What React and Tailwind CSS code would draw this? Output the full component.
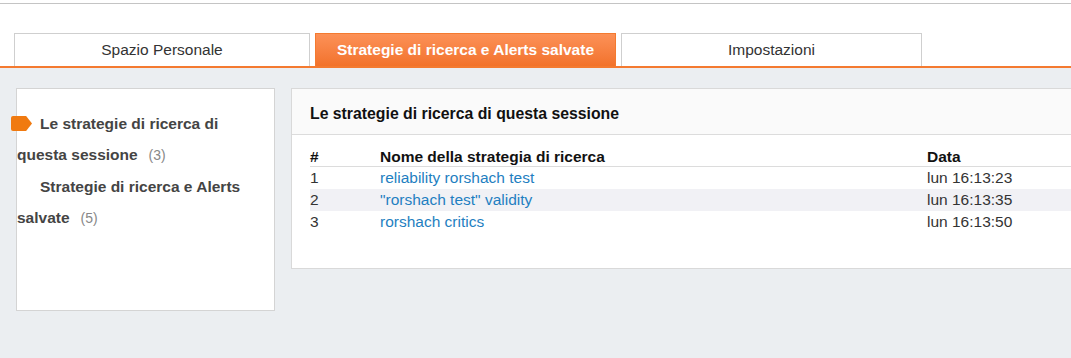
import React from "react";

const tabs = [
  { label: "Spazio Personale", active: false, w: "w-[296px]" },
  { label: "Strategie di ricerca e Alerts salvate", active: true, w: "w-[301px]" },
  { label: "Impostazioni", active: false, w: "w-[301px]" },
];

const strategie = [
  { n: 1, nome: "reliability rorshach test", data: "lun 16:13:23" },
  { n: 2, nome: "\"rorshach test\" validity", data: "lun 16:13:35" },
  { n: 3, nome: "rorshach critics", data: "lun 16:13:50" },
];

export default function App() {
  return (
    <div className="w-[1071px] h-[358px] overflow-hidden bg-white font-['Liberation_Sans',Arial,sans-serif] text-[15.5px] text-[#333]">
      {/* barra superiore */}
      <div className="h-[3px]" />
      <div className="h-px bg-[#c4c4c4]" />

      {/* tabs */}
      <div className="flex gap-[5px] pl-[14px] pt-[29px]">
        {tabs.map((t) =>
          t.active ? (
            <div
              key={t.label}
              className={`${t.w} h-[33px] flex items-center justify-center bg-gradient-to-b from-[#fc9157] to-[#f2722a] text-white font-bold border border-[#f47a30] border-b-0`}
            >
              {t.label}
            </div>
          ) : (
            <div
              key={t.label}
              className={`${t.w} h-[33px] flex items-center justify-center bg-white border border-[#cfcfcf] border-b-0 text-[#333]`}
            >
              {t.label}
            </div>
          )
        )}
      </div>
      <div className="h-[2px] bg-[#f47a30]" />

      {/* contenuto */}
      <div className="bg-[#ebeef1] h-[300px] flex items-start gap-[16px] pl-[16px] pt-[20px]">
        {/* menu laterale */}
        <div className="relative w-[259px] h-[223px] shrink-0 bg-white border border-[#d4d4d4] pt-[19px] pr-[12px] leading-[31px] font-bold text-[#444]">
          <div className="relative indent-[23px]">
            <span className="absolute left-[-6px] top-[8px] w-[21px] h-[15px] bg-[#f07a10] [clip-path:polygon(0_0,72%_0,100%_50%,72%_100%,0_100%)] rounded-l-[2px]" />
            Le strategie di ricerca di questa sessione
            <span className="ml-[11px] font-normal text-[14px] text-[#888]">(3)</span>
          </div>
          <div className="indent-[23px]">
            Strategie di ricerca e Alerts salvate
            <span className="ml-[11px] font-normal text-[14px] text-[#888]">(5)</span>
          </div>
        </div>

        {/* pannello strategie */}
        <div className="w-[820px] h-[181px] shrink-0 bg-white border border-[#d9d9d9]">
          <div className="h-[46px] bg-[#fafafa] border-b border-[#dcdcdc] flex items-center pl-[18px] pt-[4px] font-bold text-[15.8px] text-[#111]">
            Le strategie di ricerca di questa sessione
          </div>
          <div className="pl-[18px] pt-[11px]">
            <table className="w-[780px] border-collapse">
              <thead>
                <tr className="border-b border-[#dcdcdc] text-[#111] font-bold text-left">
                  <th className="w-[70px] h-[20px] p-0 align-bottom leading-[18px]">#</th>
                  <th className="w-[547px] h-[20px] p-0 align-bottom leading-[18px]">Nome della strategia di ricerca</th>
                  <th className="h-[20px] p-0 align-bottom leading-[18px]">Data</th>
                </tr>
              </thead>
              <tbody>
                {strategie.map((s) => (
                  <tr key={s.n} className="h-[22px] even:bg-[#f1f1f5]">
                    <td className="p-0 leading-[22px]">{s.n}</td>
                    <td className="p-0 leading-[22px]">
                      <a href="#" className="text-[#1f7fc1]">{s.nome}</a>
                    </td>
                    <td className="p-0 leading-[22px]">{s.data}</td>
                  </tr>
                ))}
              </tbody>
            </table>
          </div>
        </div>
      </div>
    </div>
  );
}
